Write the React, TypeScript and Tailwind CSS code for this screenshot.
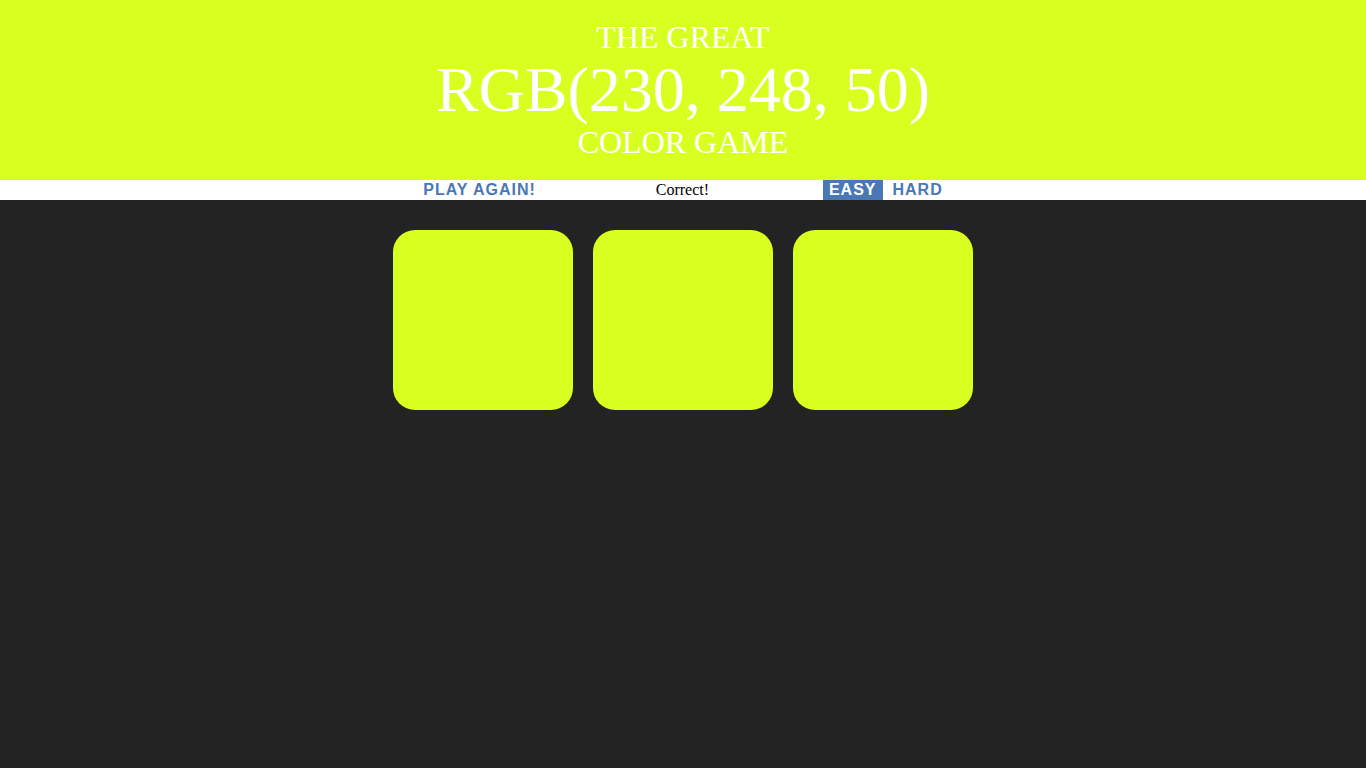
import { useState } from 'react'

const picked = '#d7ff1f'

const App = () => {
    const [mode, setMode] = useState<'easy' | 'hard'>('easy')
    const squares = mode === 'easy' ? 3 : 6

    return (
        <div className="min-h-screen w-full bg-[#232323]">
            <h1
                className="flex h-[180px] flex-col items-center justify-center text-center font-normal uppercase leading-[1.1] text-white text-[32px] [font-family:'Liberation_Serif',serif]"
                style={{ backgroundColor: picked }}
            >
                <span>The Great</span>
                <span className="block text-[64px] leading-[1.1]">RGB(230, 248, 50)</span>
                <span>Color Game</span>
            </h1>

            <div className="flex h-5 items-stretch justify-center gap-1 bg-white text-base [font-family:'Liberation_Sans',sans-serif]">
                <button className="h-5 px-[6px] font-bold uppercase leading-5 tracking-[1px] text-[#4a77b5]">
                    Play Again!
                </button>
                <span className="w-[273px] text-center leading-5 text-black [font-family:'Liberation_Serif',serif]">
                    Correct!
                </span>
                <button
                    onClick={() => setMode('easy')}
                    className={`h-5 px-[6px] font-bold uppercase leading-5 tracking-[1px] ${mode === 'easy' ? 'bg-[#4a77b5] text-white' : 'text-[#4a77b5]'}`}
                >
                    Easy
                </button>
                <button
                    onClick={() => setMode('hard')}
                    className={`h-5 px-[6px] font-bold uppercase leading-5 tracking-[1px] ${mode === 'hard' ? 'bg-[#4a77b5] text-white' : 'text-[#4a77b5]'}`}
                >
                    Hard
                </button>
            </div>

            <div className="mx-auto mt-5 flex w-[600px] flex-wrap">
                {Array.from({ length: squares }).map((_, i) => (
                    <div
                        key={i}
                        className="m-[10px] h-[180px] w-[180px] rounded-[22px]"
                        style={{ backgroundColor: picked }}
                    />
                ))}
            </div>
        </div>
    )
}

export default App
